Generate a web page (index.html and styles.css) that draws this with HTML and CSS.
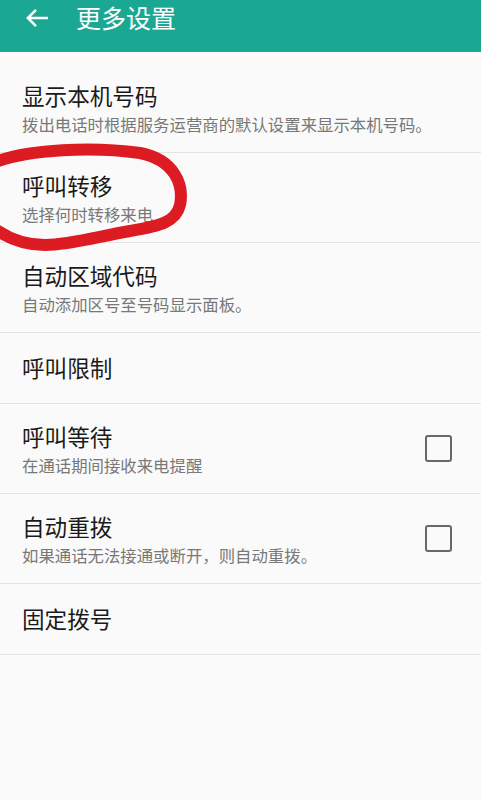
FILE: index.html
```html
<!DOCTYPE html>
<html lang="zh-CN">
<head>
<meta charset="utf-8">
<title>更多设置</title>
<link rel="stylesheet" href="styles.css">
</head>
<body>
<div class="page">
  <header class="appbar">
    <div class="bar">
      <svg class="back" width="24" height="20" viewBox="0 0 24 20">
        <path d="M23 10H3M11 1.8L2.8 10L11 18.2" fill="none" stroke="#ffffff" stroke-width="2.5" stroke-linecap="butt" stroke-linejoin="miter"/>
      </svg>
      <h1 class="title">更多设置</h1>
    </div>
  </header>
  <ul class="list">
    <li class="row two">
      <div class="text">
        <div class="t">显示本机号码</div>
        <div class="s">拨出电话时根据服务运营商的默认设置来显示本机号码。</div>
      </div>
    </li>
    <li class="row two">
      <div class="text">
        <div class="t">呼叫转移</div>
        <div class="s">选择何时转移来电</div>
      </div>
    </li>
    <li class="row two">
      <div class="text">
        <div class="t">自动区域代码</div>
        <div class="s">自动添加区号至号码显示面板。</div>
      </div>
    </li>
    <li class="row one">
      <div class="text"><div class="t">呼叫限制</div></div>
    </li>
    <li class="row two">
      <div class="text">
        <div class="t">呼叫等待</div>
        <div class="s">在通话期间接收来电提醒</div>
      </div>
      <span class="check"></span>
    </li>
    <li class="row two">
      <div class="text">
        <div class="t">自动重拨</div>
        <div class="s">如果通话无法接通或断开，则自动重拨。</div>
      </div>
      <span class="check"></span>
    </li>
    <li class="row one">
      <div class="text"><div class="t">固定拨号</div></div>
    </li>
  </ul>
  <svg class="mark" width="481" height="800" viewBox="0 0 481 800">
    <path d="M-2 161 C 30 150, 90 146, 140 153 C 175 160, 184 185, 180 205 C 176 222, 160 226, 130 231 C 100 236, 70 245, 45 245 C 25 245, 10 239, -2 231" fill="none" stroke="#dc1b22" stroke-width="12" stroke-linecap="round"/>
  </svg>
</div>
</body>
</html>
```

FILE: styles.css
```css
html, body {
  margin: 0;
  padding: 0;
  background: #fafafa;
}
body {
  font-family: "Noto Sans CJK SC", "Noto Sans", sans-serif;
}
.page {
  position: relative;
  width: 481px;
  height: 800px;
  overflow: hidden;
  background: #fafafa;
}
.appbar {
  height: 52px;
  background: #1ba893;
}
.bar {
  height: 35px;
  display: flex;
  align-items: center;
}
.back {
  margin-left: 25px;
  flex: none;
}
.title {
  margin: 0 0 2px 27px;
  font-size: 25px;
  font-weight: 400;
  line-height: 32px;
  color: #ffffff;
}
.list {
  list-style: none;
  margin: 0;
  padding: 11px 0 0 0;
}
.row {
  box-sizing: border-box;
  display: flex;
  align-items: center;
  padding: 0 29px 0 22px;
  border-bottom: 1px solid #e3e3e3;
}
.row.two { height: 90px; }
.row.one { height: 71px; }
.text {
  flex: 1;
  min-width: 0;
}
.row.two .text { padding-top: 2px; }
.t {
  font-size: 22.6px;
  line-height: 30px;
  color: #1a1a1a;
}
.s {
  margin-top: 1px;
  font-size: 16.4px;
  line-height: 24px;
  color: #787878;
  white-space: nowrap;
}
.check {
  flex: none;
  box-sizing: border-box;
  width: 27px;
  height: 27px;
  border: 2.5px solid #686868;
  border-radius: 3px;
}
.mark {
  position: absolute;
  left: 0;
  top: 0;
  pointer-events: none;
}
```
